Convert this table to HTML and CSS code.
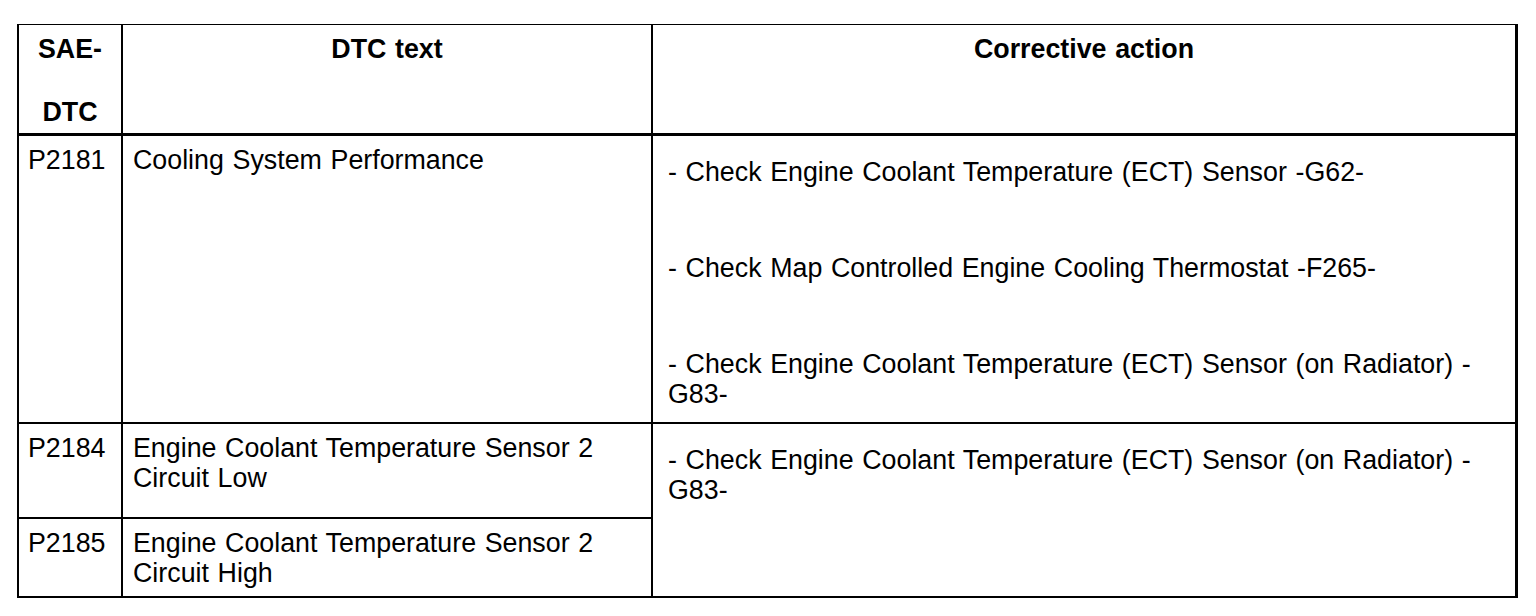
FILE: index.html
```html
<!DOCTYPE html>
<html lang="en">
<head>
<meta charset="utf-8">
<title>DTC table</title>
<link rel="stylesheet" href="styles.css">
</head>
<body>
<div class="dtc-table">
  <div class="cell head col-code">
    <p class="line">SAE-</p>
    <p class="line head-second">DTC</p>
  </div>
  <div class="cell head col-text"><p class="line">DTC text</p></div>
  <div class="cell head col-action"><p class="line">Corrective action</p></div>

  <div class="cell col-code">P2181</div>
  <div class="cell col-text">Cooling System Performance</div>
  <div class="cell col-action action-list">
    <p class="line">- Check Engine Coolant Temperature (ECT) Sensor -G62-</p>
    <p class="line">- Check Map Controlled Engine Cooling Thermostat -F265-</p>
    <p class="line">- Check Engine Coolant Temperature (ECT) Sensor (on Radiator) -<wbr>G83-</p>
  </div>

  <div class="cell col-code">P2184</div>
  <div class="cell col-text">Engine Coolant Temperature Sensor 2 Circuit Low</div>
  <div class="cell col-action span-two">
    <p class="line">- Check Engine Coolant Temperature (ECT) Sensor (on Radiator) -<wbr>G83-</p>
  </div>

  <div class="cell col-code last-row">P2185</div>
  <div class="cell col-text last-row">Engine Coolant Temperature Sensor 2 Circuit High</div>
</div>
</body>
</html>
```

FILE: styles.css
```css
html, body {
  margin: 0;
  padding: 0;
  background: #ffffff;
}

body {
  font-family: "Liberation Sans", Arial, sans-serif;
  font-size: 26.8px;
  line-height: 30px;
  word-spacing: 1.2px;
  color: #000000;
}

.dtc-table {
  display: grid;
  grid-template-columns: 104px 530px 1fr;
  grid-template-rows: 111px 288px 95px 77px;
  width: 1501px;
  margin: 24px 0 0 17px;
  box-sizing: border-box;
  border-top: 1px solid #000;
  border-left: 2px solid #000;
  border-right: 3px solid #000;
  border-bottom: 2px solid #000;
}

.cell {
  box-sizing: border-box;
  border-bottom: 2px solid #000;
  min-width: 0;
}

.line {
  margin: 0;
}

.col-code,
.col-text {
  border-right: 2px solid #000;
  padding-top: 9px;
}

.col-code {
  padding-left: 9px;
}

.col-text {
  padding-left: 10px;
  padding-right: 10px;
}

.col-action {
  padding: 21px 15px 0 15px;
}

.head {
  border-bottom-width: 3px;
  font-weight: bold;
  text-align: center;
  padding: 9px 0 0 0;
}

.head-second {
  margin-top: 33px;
}

.action-list {
  display: flex;
  flex-direction: column;
  gap: 66px;
}

.span-two {
  grid-row: span 2;
  border-bottom: none;
}

.last-row {
  border-bottom: none;
}
```
